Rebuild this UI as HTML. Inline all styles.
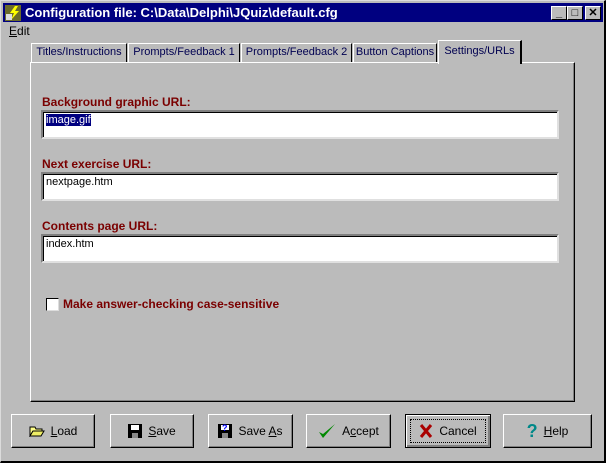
<!DOCTYPE html>
<html><head><style>
*{margin:0;padding:0;box-sizing:border-box}
body{width:606px;height:463px;background:#bbbbbb;font-family:"Liberation Sans",Arial,sans-serif;font-size:12px;position:relative;overflow:hidden}
.abs{position:absolute}
.win{left:0;top:0;width:606px;height:463px;border-top:1px solid #dcdcdc;border-left:1px solid #dcdcdc;border-right:2px solid #000;border-bottom:2px solid #000}
.title{left:3px;top:3px;width:600px;height:19px;background:#000080;color:#fff;font-weight:bold;font-size:13px}
.tb{top:6px;width:16px;height:14px;background:#bbb;border:1px solid;border-color:#fff #000 #000 #fff;font-size:11px;text-align:center;line-height:12px;color:#000;font-weight:bold}
.tab{top:43px;height:19px;border:1px solid;border-color:#fff #000 transparent #fff;border-bottom:none;line-height:17px;text-align:center;color:#000050;font-size:11px;white-space:nowrap;overflow:hidden}
.panel{left:30px;top:62px;width:545px;height:340px;border:1px solid;border-color:#fff #000 #000 #fff;box-shadow:inset -1px -1px #808080}
.lbl{color:#7a0000;font-weight:bold;font-size:12px;left:42px;white-space:nowrap}
.inp{left:41px;width:518px;height:29px;background:#fff;border:2px solid;border-color:#808080 #e0e0e0 #e0e0e0 #808080;box-shadow:inset 1px 1px #000;padding:2px 0 0 3px;font-size:11px}
.btn{top:414px;height:34px;border:1px solid;border-color:#fff #000 #000 #fff;box-shadow:inset -1px -1px #808080;display:flex;align-items:center;justify-content:center;gap:6px;font-size:12px}
svg{display:block}
</style></head><body>
<div class="abs win"></div>
<div class="abs title">
 <div class="abs" style="left:2px;top:2px;width:16px;height:16px;background:#6b6b2a"><svg width="16" height="16"><path d="M10 1L5 8h4L6 15l8-9h-4l3-5z" fill="#ff0"/><rect x="1" y="9" width="6" height="6" fill="#ddd"/></svg></div>
 <span class="abs" style="left:22px;top:2px">Configuration file: C:\Data\Delphi\JQuiz\default.cfg</span>
</div>
<div class="abs tb" style="left:551px">_</div>
<div class="abs tb" style="left:567px">□</div>
<div class="abs tb" style="left:585px">✕</div>
<div class="abs" style="left:9px;top:24px"><u>E</u>dit</div>
<div class="abs tab" style="left:31px;width:96px">Titles/Instructions</div>
<div class="abs tab" style="left:128px;width:112px">Prompts/Feedback 1</div>
<div class="abs tab" style="left:241px;width:111px">Prompts/Feedback 2</div>
<div class="abs tab" style="left:353px;width:84px">Button Captions</div>
<div class="abs panel"></div>
<div class="abs tab" style="left:438px;top:40px;height:24px;width:84px;background:#bbb;border-right:2px solid #000;line-height:20px;z-index:2">Settings/URLs</div>
<div class="abs lbl" style="top:95px">Background graphic URL:</div>
<div class="abs inp" style="top:110px"><span style="background:#000080;color:#fff">image.gif</span></div>
<div class="abs lbl" style="top:157px">Next exercise URL:</div>
<div class="abs inp" style="top:172px">nextpage.htm</div>
<div class="abs lbl" style="top:219px">Contents page URL:</div>
<div class="abs inp" style="top:234px">index.htm</div>
<div class="abs" style="left:46px;top:298px;width:13px;height:13px;background:#fff;border:1px solid;border-color:#000 #ddd #ddd #000"></div>
<div class="abs lbl" style="left:63px;top:297px">Make answer-checking case-sensitive</div>
<div class="abs btn" style="left:11px;width:84px"><svg width="16" height="12"><path d="M1 2h5l1 2h6v2H4L1 11z" fill="#ff8" stroke="#000"/><path d="M1 11l3-5h11l-3 5z" fill="#ee6" stroke="#000"/></svg><span><u>L</u>oad</span></div>
<div class="abs btn" style="left:110px;width:84px"><svg width="14" height="14"><rect width="14" height="14" fill="#000"/><rect x="3" y="1" width="8" height="5" fill="#fff"/><rect x="4" y="9" width="6" height="5" fill="#888"/></svg><span><u>S</u>ave</span></div>
<div class="abs btn" style="left:208px;width:85px"><svg width="14" height="14"><rect width="14" height="14" fill="#000"/><rect x="3" y="1" width="8" height="5" fill="#fff"/><text x="4" y="7" font-size="9" font-weight="bold" fill="#00f" font-family="Liberation Sans">?</text><rect x="4" y="9" width="6" height="5" fill="#888"/></svg><span>Save <u>A</u>s</span></div>
<div class="abs btn" style="left:306px;width:85px"><svg width="18" height="16"><path d="M1 9l4 6 12-14-12 10z" fill="#080"/></svg><span>A<u>c</u>cept</span></div>
<div class="abs btn" style="left:405px;width:86px;border:1px solid #000;box-shadow:inset 1px 1px #fff,inset -2px -2px #808080"><div style="position:absolute;left:4px;top:4px;right:4px;bottom:4px;border:1px dotted #000"></div><svg width="14" height="16"><path d="M2 2l10 12M12 2L2 14" stroke="#a00" stroke-width="3"/></svg><span>Cancel</span></div>
<div class="abs btn" style="left:503px;width:89px"><b style="color:#088;font-size:18px">?</b><span><u>H</u>elp</span></div>
</body></html>
